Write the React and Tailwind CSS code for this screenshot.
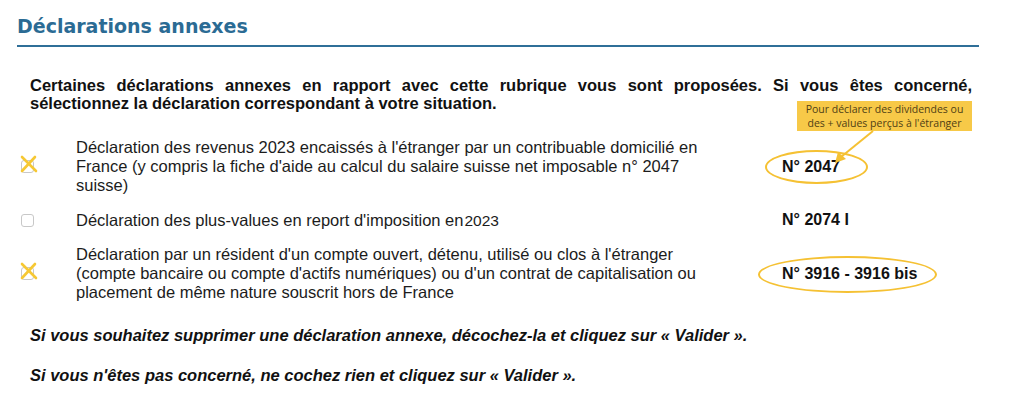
import React from 'react';

const rows = [
  {
    checked: true,
    text: (
      <>
        Déclaration des revenus 2023 encaissés à l'étranger par un contribuable domicilié en
        <br />
        France (y compris la fiche d'aide au calcul du salaire suisse net imposable n° 2047
        <br />
        suisse)
      </>
    ),
    code: 'N° 2047',
    ring: 'left-[-17px] right-[-28px] top-[-8px] bottom-[-8px]',
  },
  {
    checked: false,
    text: (
      <>
        Déclaration des plus-values en report d'imposition en<span className="ml-[1px] text-[15.5px]">2023</span>
      </>
    ),
    code: 'N° 2074 I',
  },
  {
    checked: true,
    text: (
      <>
        Déclaration par un résident d'un compte ouvert, détenu, utilisé ou clos à l'étranger
        <br />
        (compte bancaire ou compte d'actifs numériques) ou d'un contrat de capitalisation ou
        <br />
        placement de même nature souscrit hors de France
      </>
    ),
    code: 'N° 3916 - 3916 bis',
    ring: 'left-[-24px] right-[-20px] top-[-9px] bottom-[-10px]',
  },
];

const Checkbox = ({ checked }) => (
  <div className="relative w-[13px] h-[13px] shrink-0">
    <div className="w-[13px] h-[13px] rounded-[3px] border border-[#c8c8c8] bg-white" />
    {checked && (
      <svg className="absolute left-[-2px] top-[-6px]" width="20" height="20" viewBox="0 0 20 20">
        <path d="M3 3 L17 17 M16 3 L3 17" stroke="#f6c834" strokeWidth="2.6" strokeLinecap="round" fill="none" />
      </svg>
    )}
  </div>
);

const App = () => {
  return (
    <div className="relative w-[1024px] h-[417px] overflow-hidden bg-white font-['Liberation_Sans',Arial,sans-serif] text-[#111]">
      {/* Title */}
      <div className="pl-[17px] pr-[45px] pt-[13px]">
        <h2 className="font-['DejaVu_Sans',sans-serif] font-bold text-[19px] leading-[26px] text-[#2b6b94] pb-[6px] border-b-2 border-[#2f6f98]">
          Déclarations annexes
        </h2>
      </div>

      {/* Intro */}
      <div className="pl-[30px] pr-[52px] mt-[29px] text-[16.5px] font-bold leading-[18px] text-[#111]">
        <span className="block text-justify [text-align-last:justify]">
          Certaines déclarations annexes en rapport avec cette rubrique vous sont proposées. Si vous êtes concerné,
        </span>
        <span className="block">sélectionnez la déclaration correspondant à votre situation.</span>
      </div>

      {/* Rows */}
      <div className="mt-[26px] pl-[21px] flex flex-col gap-[13px]">
        {rows.map((row, i) => (
          <div key={i} className="flex items-center">
            <Checkbox checked={row.checked} />
            <div className="ml-[42px] w-[640px] text-[16.5px] leading-[19px] text-[#1c1c1c]">{row.text}</div>
            <div className="ml-[66px] text-[16px] font-bold">
              <span className="relative inline-block leading-[18px]">
                {row.code}
                {row.ring && (
                  <span className={`absolute ${row.ring} rounded-[50%] border-2 border-[#f5c133]`} />
                )}
              </span>
            </div>
          </div>
        ))}
      </div>

      {/* Footer notes */}
      <div className="pl-[30px] mt-[24px] flex flex-col gap-[22px] text-[16.5px] font-bold italic leading-[18px]">
        <p>Si vous souhaitez supprimer une déclaration annexe, décochez-la et cliquez sur « Valider ».</p>
        <p>Si vous n'êtes pas concerné, ne cochez rien et cliquez sur « Valider ».</p>
      </div>

      {/* Annotation */}
      <div className="absolute left-[797px] top-[101px] w-[175px] h-[30px] bg-[#f7c948] flex flex-col items-center justify-center font-['Open_Sans',sans-serif] text-[10.5px] leading-[14px] text-[#4f4015]">
        <span>Pour déclarer des dividendes ou</span>
        <span>des + values perçus à l'étranger</span>
      </div>
      <svg className="absolute left-[825px] top-[128px]" width="60" height="40" viewBox="0 0 60 40">
        <path d="M48 3 L16 29" stroke="#f5c133" strokeWidth="2" fill="none" />
        <path d="M10 35 L13 24 L21 31 Z" fill="#f5c133" />
      </svg>
    </div>
  );
};

export default App;
